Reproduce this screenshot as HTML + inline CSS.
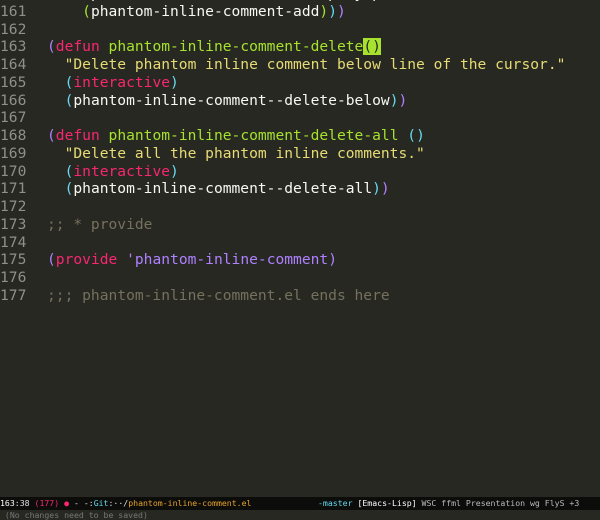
<!DOCTYPE html>
<html><head><meta charset="utf-8"><style>
html,body{margin:0;padding:0;width:600px;height:520px;overflow:hidden;background:#272822;}
body{font-family:"DejaVu Sans Mono","Liberation Mono",monospace;font-size:14.6px;color:#f8f8f2;position:relative;}
.l{position:absolute;left:0;height:18px;line-height:18px;white-space:pre;}
.n{color:#8f908a;display:inline-block;width:47px;}
.p{color:#ae81ff}.k{color:#f92672}.f{color:#a6e22e}.s{color:#e6db74}.c{color:#66d9ef}.g{color:#a6e22e}.cm{color:#75715e}
.cur{background:#a6e22e;color:#272822}
#ml{position:absolute;left:0;top:497px;width:600px;height:13px;background:#0c0c0a;font-size:8.2px;line-height:13px;white-space:pre;color:#e0e0e0}
#ea{position:absolute;left:0;top:510px;width:600px;height:10px;font-size:8.2px;line-height:10px;color:#777;white-space:pre}
</style></head><body>
<div class="l" style="top:-15px"><span class="n">160</span>    <span class="c">(</span>phantom-inline-comment--display-position <span class="c">)</span></div>
<div class="l" style="top:3px"><span class="n">161</span>    <span class="g">(</span>phantom-inline-comment-add<span class="g">)</span><span class="c">)</span><span class="p">)</span></div>
<div class="l" style="top:21px"><span class="n">162</span></div>
<div class="l" style="top:38px"><span class="n">163</span><span class="p">(</span><span class="k">defun</span> <span class="f">phantom-inline-comment-delete</span><span class="cur">()</span></div>
<div class="l" style="top:56px"><span class="n">164</span>  <span class="s">"Delete phantom inline comment below line of the cursor."</span></div>
<div class="l" style="top:74px"><span class="n">165</span>  <span class="c">(</span><span class="k">interactive</span><span class="c">)</span></div>
<div class="l" style="top:92px"><span class="n">166</span>  <span class="c">(</span>phantom-inline-comment--delete-below<span class="c">)</span><span class="p">)</span></div>
<div class="l" style="top:109px"><span class="n">167</span></div>
<div class="l" style="top:127px"><span class="n">168</span><span class="p">(</span><span class="k">defun</span> <span class="f">phantom-inline-comment-delete-all</span> <span class="c">()</span></div>
<div class="l" style="top:145px"><span class="n">169</span>  <span class="s">"Delete all the phantom inline comments."</span></div>
<div class="l" style="top:163px"><span class="n">170</span>  <span class="c">(</span><span class="k">interactive</span><span class="c">)</span></div>
<div class="l" style="top:180px"><span class="n">171</span>  <span class="c">(</span>phantom-inline-comment--delete-all<span class="c">)</span><span class="p">)</span></div>
<div class="l" style="top:198px"><span class="n">172</span></div>
<div class="l" style="top:216px"><span class="n">173</span><span class="cm">;; * provide</span></div>
<div class="l" style="top:234px"><span class="n">174</span></div>
<div class="l" style="top:251px"><span class="n">175</span><span class="p">(</span><span class="k">provide</span> <span class="p">'phantom-inline-comment</span><span class="p">)</span></div>
<div class="l" style="top:269px"><span class="n">176</span></div>
<div class="l" style="top:287px"><span class="n">177</span><span class="cm">;;; phantom-inline-comment.el ends here</span></div>
<div id="ml"><span style="color:#fff">163</span>:38 <span style="color:#f92672">(177)</span> <span style="color:#f92672">●</span> - -:<span style="color:#66d9ef">Git</span>:··/<span style="color:#e6a32e">phantom-inline-comment.el</span><span style="position:absolute;left:318px;top:0"><span style="color:#66d9ef">-master</span> <span style="color:#fff">[Emacs-Lisp]</span> <span style="color:#bbb">WSC ffml Presentation wg FlyS +3</span></span></div>
<div id="ea"> (No changes need to be saved)</div>
</body></html>
